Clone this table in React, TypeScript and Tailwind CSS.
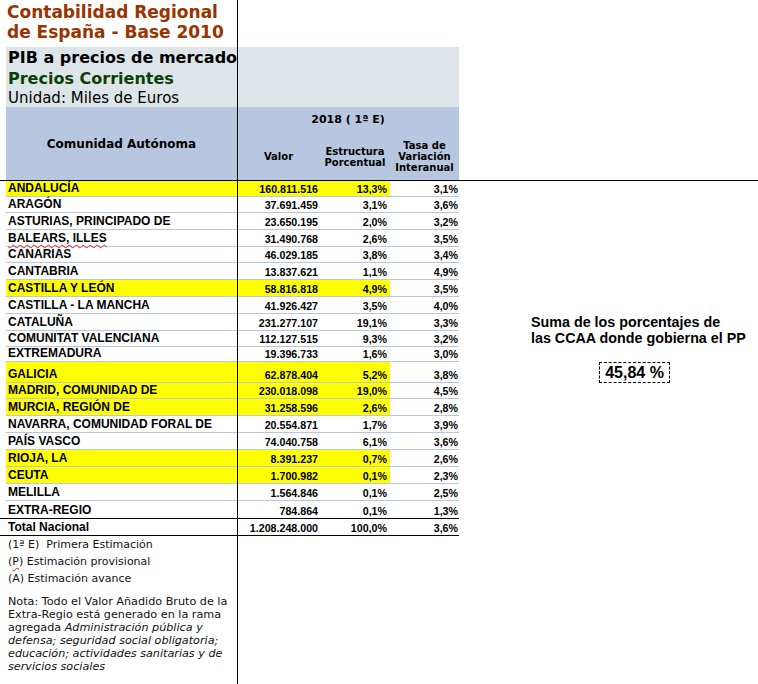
import React from "react";

type Row = {
  name: string;
  valor: string;
  estr: string;
  tasa: string;
  hl: boolean;
  h: string;
  squiggle?: boolean;
  noBorder?: boolean;
};

const rows: Row[] = [
  { name: "ANDALUCÍA", valor: "160.811.516", estr: "13,3%", tasa: "3,1%", hl: true, h: "h-[16px]" },
  { name: "ARAGÓN", valor: "37.691.459", estr: "3,1%", tasa: "3,6%", hl: false, h: "h-[16px]" },
  { name: "ASTURIAS, PRINCIPADO DE", valor: "23.650.195", estr: "2,0%", tasa: "3,2%", hl: false, h: "h-[17px]" },
  { name: "BALEARS, ILLES", valor: "31.490.768", estr: "2,6%", tasa: "3,5%", hl: false, h: "h-[17px]", squiggle: true },
  { name: "CANARIAS", valor: "46.029.185", estr: "3,8%", tasa: "3,4%", hl: false, h: "h-[16px]" },
  { name: "CANTABRIA", valor: "13.837.621", estr: "1,1%", tasa: "4,9%", hl: false, h: "h-[17px]" },
  { name: "CASTILLA Y LEÓN", valor: "58.816.818", estr: "4,9%", tasa: "3,5%", hl: true, h: "h-[17px]" },
  { name: "CASTILLA - LA MANCHA", valor: "41.926.427", estr: "3,5%", tasa: "4,0%", hl: false, h: "h-[17px]" },
  { name: "CATALUÑA", valor: "231.277.107", estr: "19,1%", tasa: "3,3%", hl: false, h: "h-[17px]" },
  { name: "COMUNITAT VALENCIANA", valor: "112.127.515", estr: "9,3%", tasa: "3,2%", hl: false, h: "h-[16px]" },
  { name: "EXTREMADURA", valor: "19.396.733", estr: "1,6%", tasa: "3,0%", hl: false, h: "h-[15px]" },
  { name: "GALICIA", valor: "62.878.404", estr: "5,2%", tasa: "3,8%", hl: true, h: "h-[21px]" },
  { name: "MADRID, COMUNIDAD DE", valor: "230.018.098", estr: "19,0%", tasa: "4,5%", hl: true, h: "h-[16px]" },
  { name: "MURCIA, REGIÓN DE", valor: "31.258.596", estr: "2,6%", tasa: "2,8%", hl: true, h: "h-[17px]" },
  { name: "NAVARRA, COMUNIDAD FORAL DE", valor: "20.554.871", estr: "1,7%", tasa: "3,9%", hl: false, h: "h-[17px]" },
  { name: "PAÍS VASCO", valor: "74.040.758", estr: "6,1%", tasa: "3,6%", hl: false, h: "h-[17px]" },
  { name: "RIOJA, LA", valor: "8.391.237", estr: "0,7%", tasa: "2,6%", hl: true, h: "h-[17px]" },
  { name: "CEUTA", valor: "1.700.982", estr: "0,1%", tasa: "2,3%", hl: true, h: "h-[17px]" },
  { name: "MELILLA", valor: "1.564.846", estr: "0,1%", tasa: "2,5%", hl: false, h: "h-[17px]" },
  { name: "EXTRA-REGIO", valor: "784.864", estr: "0,1%", tasa: "1,3%", hl: false, h: "h-[17px]", noBorder: true },
];

const arial = "font-['Liberation_Sans',Arial,sans-serif]";
const deja = "font-['DejaVu_Sans',sans-serif]";

function DataRow({ r }: { r: Row }) {
  const bg = r.hl ? "bg-[#ffff00]" : "";
  return (
    <div
      className={`ml-[6px] flex w-[453px] ${r.h} ${
        r.noBorder ? "" : "border-b border-[#b7c7df]"
      } ${arial} font-bold text-black`}
    >
      <div className={`flex w-[231px] items-end pb-[1px] pl-[2px] text-[12px] leading-[14px] ${bg}`}>
        <span
          className={
            r.squiggle
              ? "underline decoration-[#e02020] decoration-wavy decoration-1 underline-offset-[2px]"
              : ""
          }
        >
          {r.name}
        </span>
      </div>
      <div className={`flex w-[83px] items-end justify-end pb-[0px] pr-[2px] text-[10.67px] leading-[14px] ${bg}`}>
        {r.valor}
      </div>
      <div className={`flex w-[70px] items-end justify-end pb-[0px] pr-[3px] text-[10.67px] leading-[14px] ${bg}`}>
        {r.estr}
      </div>
      <div className="flex w-[69px] items-end justify-end pb-[0px] pr-[1px] text-[10.67px] leading-[14px]">
        {r.tasa}
      </div>
    </div>
  );
}

export default function App() {
  return (
    <div className="relative h-[684px] w-[758px] overflow-hidden bg-white text-black">
      {/* Title */}
      <div className={`h-[47px] pl-[7px] pt-[2px] ${deja} text-[17px] font-bold leading-[20px] text-[#993300]`}>
        <div>Contabilidad Regional</div>
        <div>de España - Base 2010</div>
      </div>

      {/* Grey panel */}
      <div className={`ml-[6px] h-[60px] w-[453px] bg-[#dee5e8] pl-[2px] pt-[1px] ${deja}`}>
        <div className="text-[16px] font-bold leading-[20px]">PIB a precios de mercado</div>
        <div className="text-[16px] font-bold leading-[21px] text-[#0b3d0b]">Precios Corrientes</div>
        <div className="text-[15px] leading-[18px]">Unidad: Miles de Euros</div>
      </div>

      {/* Blue header */}
      <div className={`ml-[6px] flex h-[73px] w-[453px] bg-[#b7c7df] ${deja} font-bold text-black`}>
        <div className="flex w-[231px] items-center justify-center text-[12px]">Comunidad Autónoma</div>
        <div className="flex w-[222px] flex-col">
          <div className="flex h-[26px] items-center justify-center text-[11px]">2018 ( 1ª E)</div>
          <div className="flex flex-1 text-[10px] leading-[11px]">
            <div className="flex w-[83px] items-center justify-center">Valor</div>
            <div className="flex w-[70px] items-center justify-center text-center">
              Estructura
              <br />
              Porcentual
            </div>
            <div className="flex w-[69px] items-center justify-center text-center">
              Tasa de
              <br />
              Variación
              <br />
              Interanual
            </div>
          </div>
        </div>
      </div>

      {/* Frozen pane horizontal line */}
      <div className="h-px w-full bg-black" />

      {/* Body */}
      <div className="flex">
        <div className="w-[460px]">
          {rows.map((r) => (
            <DataRow key={r.name} r={r} />
          ))}
          <div className={`flex h-[18px] w-[459px] border-y border-black ${arial} font-bold`}>
            <div className="flex w-[237px] items-end pb-[1px] pl-[8px] text-[12px] leading-[14px]">Total Nacional</div>
            <div className="flex w-[83px] items-end justify-end pb-[0px] pr-[2px] text-[10.67px] leading-[14px]">1.208.248.000</div>
            <div className="flex w-[70px] items-end justify-end pb-[0px] pr-[3px] text-[10.67px] leading-[14px]">100,0%</div>
            <div className="flex w-[69px] items-end justify-end pb-[0px] pr-[1px] text-[10.67px] leading-[14px]">3,6%</div>
          </div>
          <div className={`pl-[8px] ${deja} text-[11px] text-[#111]`}>
            <div className="leading-[17px] whitespace-pre">(1ª E)  Primera Estimación</div>
            <div className="leading-[17px]">
              (<span className="underline decoration-[#e02020] decoration-wavy decoration-1 underline-offset-[2px]">P</span>) Estimación provisional
            </div>
            <div className="leading-[17px]">(A) Estimación avance</div>
            <div className="mt-[8px] w-[228px] text-[11.2px] leading-[13px]">
              Nota: Todo el Valor Añadido Bruto de la Extra-Regio está generado en la rama agregada{" "}
              <i>Administración pública y defensa; seguridad social obligatoria; educación; actividades sanitarias y de servicios sociales</i>
            </div>
          </div>
        </div>

        {/* Right note */}
        <div className={`flex-1 pl-[71px] pt-[133px] ${arial} font-bold`}>
          <div className="text-[14.3px] leading-[16px]">
            <div>Suma de los porcentajes de</div>
            <div>las CCAA donde gobierna el PP</div>
          </div>
          <div className="ml-[68px] mt-[16px] flex h-[21px] w-[71px] items-center justify-center border border-dashed border-black text-[16px]">
            45,84 %
          </div>
        </div>
      </div>

      {/* Frozen pane vertical line */}
      <div className="absolute bottom-0 left-[237px] top-0 w-px bg-black" />
    </div>
  );
}
